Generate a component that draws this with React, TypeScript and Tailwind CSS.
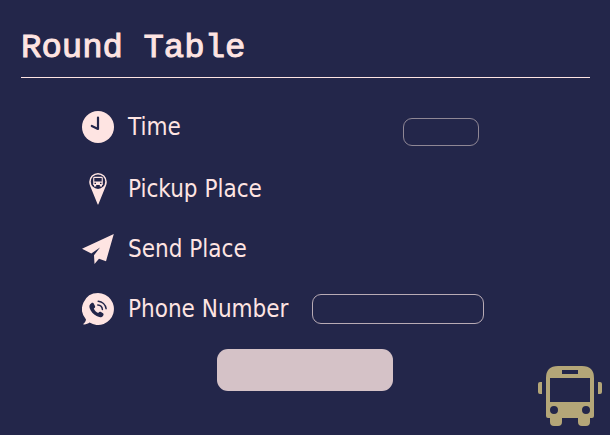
import type { ReactNode } from "react";

function ClockIcon() {
  return (
    <svg viewBox="0 0 32 32" className="size-8" aria-hidden="true">
      <circle cx="16" cy="16" r="16" fill="currentColor" />
      <path d="M16 6.500V18L9.800 15" fill="none" stroke="#23264a" strokeWidth="2.200" strokeLinecap="round" strokeLinejoin="round" />
    </svg>
  );
}

function PickupIcon() {
  return (
    <svg viewBox="0 0 18 32" className="h-8 w-[18px]" aria-hidden="true">
      <path d="M9 0a8.800 8.800 0 0 1 8.800 8.800c0 2-.8 3.900-1.700 6L9.300 31.600h-.6L1.900 14.800C1 12.700.2 10.800.2 8.800A8.800 8.800 0 0 1 9 0z" fill="currentColor" />
      <circle cx="9" cy="8.700" r="7.200" fill="#23264a" />
      <path fillRule="evenodd" fill="currentColor" d="M5.500 3.800h7q1.300 0 1.300 1.300V12H13v1.500h-2.200V12H7.200v1.500H5V12h-.8V5.100Q4.200 3.800 5.500 3.800zM5.300 5v3.600h7.400V5zM5.500 9.800v1.200h1.500V9.800zM11 9.800v1.200h1.500V9.800z" />
    </svg>
  );
}

function SendIcon() {
  return (
    <svg viewBox="0 0 32 30" className="h-[30px] w-8" aria-hidden="true">
      <path fill="currentColor" d="M31.800 0 0 14.800 9.300 19.400 18 13.600 12 21.200 12.500 30 17 24.800 24 27.200z" />
    </svg>
  );
}

function PhoneIcon() {
  return (
    <svg viewBox="0 0 32 32" className="size-8" aria-hidden="true">
      <path fill="currentColor" d="M16 0a16 16 0 1 1-8.500 29.600C6 31 3.500 31.600.8 31.300 2.800 29.900 3.800 28 4 26.500A16 16 0 0 1 16 0z" />
      <path fill="#23264a" d="M9.300 10.200c1.200-.8 2.200-.2 2.800 1l.9 1.700c.5 1.100-.1 1.900-1.200 2.700.8 2.100 2.400 3.700 4.400 4.500.8-1.100 1.700-1.600 2.800-1l1.600 1c1.200.7 1.300 1.700.4 2.800-1.400 1.700-3.700 1.600-6.400.2-3.300-1.700-5.900-4.600-6.900-7.800-.7-2.200-.2-4.100 1.600-5.100z" />
      <path fill="none" stroke="#23264a" strokeWidth="1.500" strokeLinecap="round" d="M16.200 8.200c4 .4 7.300 3.500 7.900 7.500M15.800 12c2.600.2 4.400 1.900 4.600 4.500" />
    </svg>
  );
}

function BusIcon() {
  return (
    <svg viewBox="0 0 64 60" className="mt-[17px] h-[60px] w-16 justify-self-end text-[#b4a678]" aria-hidden="true">
      <path
        fillRule="evenodd"
        fill="currentColor"
        d="M20 0h24q12 0 12 12v38q0 2-2 2h-2v4q0 4-4 4h-4q-4 0-4-4v-4H24v4q0 4-4 4h-4q-4 0-4-4v-4h-2q-2 0-2-2V12Q8 0 20 0zM24 4v4h16V4zM12 12v24h40V12zM16 40a4 4 0 1 0 0 8 4 4 0 0 0 0-8zM48 40a4 4 0 1 0 0 8 4 4 0 0 0 0-8z"
      />
      <path fill="currentColor" d="M4 16v12H2q-2 0-2-2v-8q0-2 2-2zM60 16v12h2q2 0 2-2v-8q0-2-2-2z" />
    </svg>
  );
}

function Row({ icon, children }: { icon: ReactNode; children: ReactNode }) {
  return (
    <div className="flex h-[60px] items-center first:mb-0.5">
      <span className="mr-3.5 flex w-8 shrink-0 justify-center">{icon}</span>
      {children}
    </div>
  );
}

export default function App() {
  return (
    <main className="min-h-screen bg-[#23264a] pb-[9px] font-['DejaVu_Sans_Condensed','DejaVu_Sans',sans-serif] text-2xl text-[#fee4e2]">
      <header className="mr-5 ml-[21px] border-b border-[#fee4e2] pt-7 pb-[9px]">
        <h1 className="font-['Liberation_Mono',monospace] text-[34px] leading-10 [-webkit-text-stroke:1px_#fee4e2]">Round Table</h1>
      </header>
      <form>
        <div className="mt-[19px] ml-[82px] max-w-[402px]">
          <Row icon={<ClockIcon />}>
            <label htmlFor="time">Time</label>
            <input id="time" type="text" className="mt-2.5 mr-[5px] ml-auto h-7 w-[76px] rounded-[9px] border border-[#8f8795] px-2 text-sm outline-none" />
          </Row>
          <Row icon={<PickupIcon />}>
            <span>Pickup Place</span>
          </Row>
          <Row icon={<SendIcon />}>
            <span>Send Place</span>
          </Row>
          <Row icon={<PhoneIcon />}>
            <label htmlFor="phone">Phone Number</label>
            <input id="phone" type="tel" className="ml-auto h-[30px] w-[172px] rounded-[9px] border border-[#b8abb5] px-2 text-sm outline-none" />
          </Row>
        </div>
        <div className="mt-2.5 grid grid-cols-[1fr_auto_1fr] items-start px-2">
          <button type="submit" aria-label="Submit" className="col-start-2 h-[42px] w-44 rounded-[11px] bg-[#d5c2c7]" />
          <BusIcon />
        </div>
      </form>
    </main>
  );
}
